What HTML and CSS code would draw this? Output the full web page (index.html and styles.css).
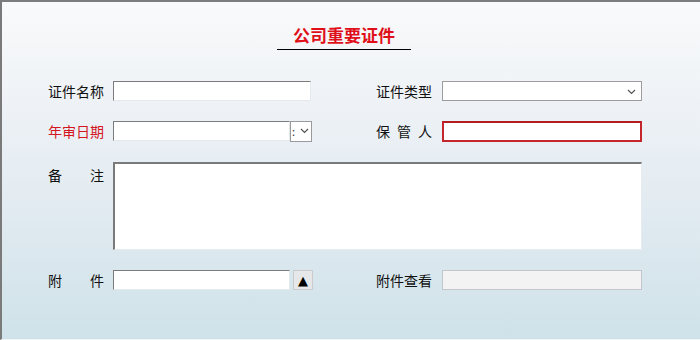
FILE: index.html
```html
<!DOCTYPE html>
<html lang="zh-CN">
<head>
    <meta charset="UTF-8">
    <title>公司重要证件</title>
    <link rel="stylesheet" href="styles.css">
</head>
<body>

<div class="panel">
    <div class="title-wrap">
        <h1 class="title">公司重要证件</h1>
    </div>

    <form class="cert-form">
        <label class="field-label">证件名称</label>
        <div class="field"><input type="text" class="box wide"></div>
        <label class="field-label">证件类型</label>
        <div class="field">
            <div class="box combo">
                <svg class="chev" width="9" height="6" viewBox="0 0 9 6"><path d="M1 1l3.5 3.5L8 1" fill="none" stroke="#555" stroke-width="1.2"/></svg>
            </div>
        </div>

        <label class="field-label required">年审日期</label>
        <div class="field">
            <input type="text" class="box short">
            <span class="date-btn">
                <span class="colon">:</span>
                <svg width="9" height="6" viewBox="0 0 9 6"><path d="M1 1l3.5 3.5L8 1" fill="none" stroke="#555" stroke-width="1.2"/></svg>
            </span>
        </div>
        <label class="field-label">保管人</label>
        <div class="field"><input type="text" class="box full red"></div>

        <label class="field-label memo-label">备注</label>
        <div class="field span3"><textarea class="box memo"></textarea></div>

        <label class="field-label">附件</label>
        <div class="field">
            <input type="text" class="box short">
            <span class="upload-btn">▲</span>
        </div>
        <label class="field-label">附件查看</label>
        <div class="field"><input type="text" class="box full readonly" readonly></div>
    </form>
</div>

</body>
</html>
```

FILE: styles.css
```css
body {
    margin: 0;
    padding: 0;
    font-family: "Noto Sans CJK SC", "Liberation Sans", sans-serif;
}

.panel {
    box-sizing: border-box;
    width: 700px;
    height: 340px;
    border-top: 2px solid #7d7d7d;
    border-left: 2px solid #7a7a7a;
    border-bottom: 1px solid #eef4f6;
    background: linear-gradient(to bottom, #f9fafb 0%, #eef2f6 30%, #e2ebf1 60%, #cfe2e9 100%);
}

.title-wrap {
    display: flex;
    justify-content: center;
    padding-top: 23px;
    padding-right: 14px;
}

.title {
    margin: 0;
    width: 134px;
    text-align: center;
    font-size: 17px;
    line-height: 20px;
    font-weight: bold;
    color: #e0101a;
    padding-bottom: 4px;
    border-bottom: 1px solid #000;
}

.cert-form {
    display: grid;
    grid-template-columns: 65px 263px 66px 200px;
    row-gap: 20px;
    padding: 31px 0 0 46px;
}

.field-label {
    width: 56px;
    white-space: nowrap;
    font-size: 14px;
    line-height: 20px;
    color: #111;
    text-align: justify;
    text-align-last: justify;
    align-self: center;
}

.field-label.required {
    color: #d4161e;
}

.memo-label {
    align-self: start;
    margin-top: 4px;
}

.field {
    display: flex;
    align-items: center;
    height: 20px;
}

.span3 {
    grid-column: span 3;
    height: auto;
    margin-top: 1px;
}

.box {
    box-sizing: border-box;
    height: 20px;
    margin: 0;
    padding: 0 3px;
    background: #fff;
    border: 1px solid #e4e9ee;
    border-top-color: #7b7b7b;
    border-left-color: #7b7b7b;
    outline: none;
    font-size: 13px;
}

.wide {
    width: 198px;
}

.short {
    width: 177px;
}

.full {
    width: 200px;
}

.combo {
    position: relative;
    width: 200px;
    border: 1px solid #9c9c9c;
}

.chev {
    position: absolute;
    right: 5px;
    top: 7px;
}

.red {
    height: 21px;
    border: 2px solid #c4262c;
    border-top-color: #b31d22;
}

.readonly {
    background: #f3f3f3;
    border: 1px solid #c3c7cb;
}

.memo {
    display: block;
    width: 529px;
    height: 88px;
    resize: none;
    border-width: 2px 1px 1px 2px;
    border-top-color: #7a7a7a;
    border-left-color: #7a7a7a;
    border-right-color: #e6ecf0;
    border-bottom-color: #e6ecf0;
}

.date-btn {
    box-sizing: border-box;
    display: flex;
    align-items: center;
    justify-content: space-between;
    width: 22px;
    height: 21px;
    padding: 0 2px 0 1px;
    background: #fff;
    border: 1px solid #9a9a9a;
    font-size: 11px;
    color: #333;
}

.colon {
    line-height: 1;
}

.upload-btn {
    box-sizing: border-box;
    display: flex;
    align-items: center;
    justify-content: center;
    width: 20px;
    height: 20px;
    margin-left: 3px;
    background: #e6e7e8;
    border: 1px solid #c9cbcd;
    font-family: "DejaVu Sans", sans-serif;
    font-size: 13px;
    color: #000;
}
```
